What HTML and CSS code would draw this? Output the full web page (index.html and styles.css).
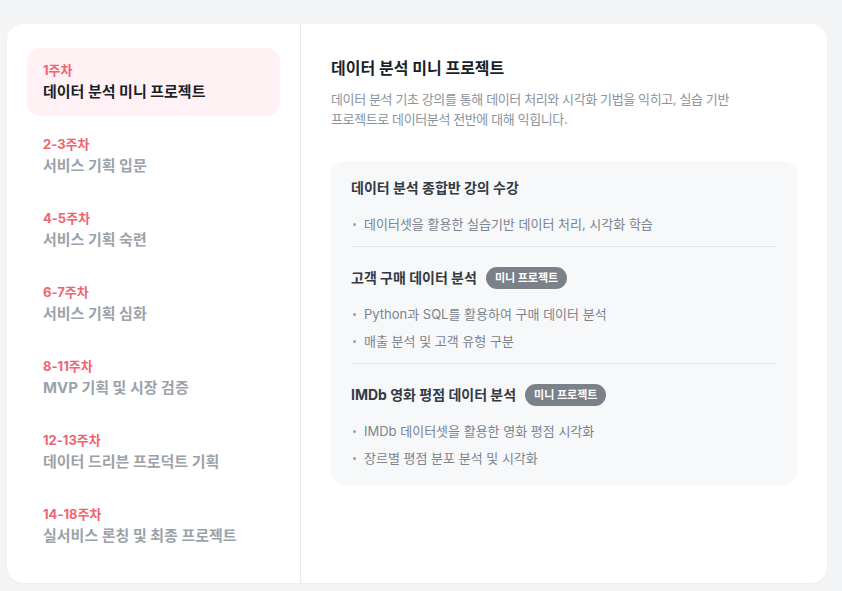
FILE: index.html
```html
<!DOCTYPE html>
<html lang="ko">
<head>
<meta charset="utf-8">
<title>커리큘럼</title>
<link rel="stylesheet" href="styles.css">
</head>
<body>
<div class="card">
  <nav class="sidebar">
    <div class="week active">
      <div class="week-label">1주차</div>
      <div class="week-title">데이터 분석 미니 프로젝트</div>
    </div>
    <div class="week">
      <div class="week-label">2-3주차</div>
      <div class="week-title">서비스 기획 입문</div>
    </div>
    <div class="week">
      <div class="week-label">4-5주차</div>
      <div class="week-title">서비스 기획 숙련</div>
    </div>
    <div class="week">
      <div class="week-label">6-7주차</div>
      <div class="week-title">서비스 기획 심화</div>
    </div>
    <div class="week">
      <div class="week-label">8-11주차</div>
      <div class="week-title">MVP 기획 및 시장 검증</div>
    </div>
    <div class="week">
      <div class="week-label">12-13주차</div>
      <div class="week-title">데이터 드리븐 프로덕트 기획</div>
    </div>
    <div class="week">
      <div class="week-label">14-18주차</div>
      <div class="week-title">실서비스 론칭 및 최종 프로젝트</div>
    </div>
  </nav>
  <main class="content">
    <h1 class="content-title">데이터 분석 미니 프로젝트</h1>
    <p class="content-desc">데이터 분석 기초 강의를 통해 데이터 처리와 시각화 기법을 익히고, 실습 기반 프로젝트로 데이터분석 전반에 대해 익힙니다.</p>
    <div class="detail-box">
      <section class="detail">
        <h2 class="detail-title">데이터 분석 종합반 강의 수강</h2>
        <ul class="detail-list">
          <li>데이터셋을 활용한 실습기반 데이터 처리, 시각화 학습</li>
        </ul>
      </section>
      <section class="detail">
        <h2 class="detail-title">고객 구매 데이터 분석 <span class="badge">미니 프로젝트</span></h2>
        <ul class="detail-list">
          <li>Python과 SQL를 활용하여 구매 데이터 분석</li>
          <li>매출 분석 및 고객 유형 구분</li>
        </ul>
      </section>
      <section class="detail">
        <h2 class="detail-title">IMDb 영화 평점 데이터 분석 <span class="badge">미니 프로젝트</span></h2>
        <ul class="detail-list">
          <li>IMDb 데이터셋을 활용한 영화 평점 시각화</li>
          <li>장르별 평점 분포 분석 및 시각화</li>
        </ul>
      </section>
    </div>
  </main>
</div>
</body>
</html>
```
FILE: styles.css
```css
* { box-sizing: border-box; }

html, body {
  margin: 0;
  padding: 0;
}

body {
  background: #f2f4f6;
  font-family: "Inter", "Noto Sans CJK KR", sans-serif;
  letter-spacing: 0;
  word-break: keep-all;
  padding: 24px 15px 8px 7px;
}

.card {
  width: 820px;
  background: #ffffff;
  border-radius: 16px;
  display: flex;
  box-shadow: 0 1px 3px rgba(0, 0, 0, 0.03);
}

.sidebar {
  width: 294px;
  flex-shrink: 0;
  border-right: 1px solid #e8ebee;
  padding: 24px 20px 23px 20px;
  display: flex;
  flex-direction: column;
  gap: 6px;
}

.week {
  padding: 12px 16px;
  border-radius: 14px;
}

.week.active {
  background: #fff1f4;
}

.week-label {
  font-size: 13px;
  line-height: 20px;
  font-weight: 700;
  color: #f06472;
}

.week-title {
  font-size: 15px;
  line-height: 24px;
  font-weight: 700;
  color: #9ba2aa;
}

.week.active .week-title {
  color: #191f28;
}

.content {
  flex: 1;
  padding: 32px 30px 30px 30px;
}

.content-title {
  margin: 0;
  font-size: 16px;
  line-height: 24px;
  font-weight: 700;
  color: #191f28;
}

.content-desc {
  margin: 9px 0 0 0;
  max-width: 420px;
  font-size: 13px;
  line-height: 20px;
  letter-spacing: -0.03em;
  word-break: keep-all;
  color: #8b939c;
}

.detail-box {
  margin-top: 32px;
  background: #f7f8fa;
  border-radius: 14px;
  padding: 16px 20px 17px 20px;
}

.detail {
  padding: 20px 0 12px 0;
  border-top: 1px solid #e5e8eb;
}

.detail:first-child {
  padding-top: 0;
  border-top: none;
}

.detail:last-child {
  padding-bottom: 0;
}

.detail-title {
  margin: 0;
  font-size: 14px;
  line-height: 22px;
  font-weight: 700;
  color: #333a43;
  display: flex;
  align-items: center;
  gap: 9px;
}

.badge {
  display: inline-flex;
  align-items: center;
  height: 22px;
  padding: 0 9px;
  border-radius: 11px;
  background: #7b8189;
  color: #ffffff;
  font-size: 11px;
  font-weight: 700;
}

.detail-list {
  list-style: none;
  margin: 15px 0 0 0;
  padding: 0;
  display: flex;
  flex-direction: column;
  gap: 7px;
}

.detail-list li {
  display: flex;
  align-items: center;
  font-size: 13px;
  line-height: 20px;
  color: #7b838c;
}

.detail-list li::before {
  content: "";
  width: 3px;
  height: 3px;
  border-radius: 50%;
  background: #9aa1a9;
  margin: 0 8px 0 2px;
  flex-shrink: 0;
}
```
